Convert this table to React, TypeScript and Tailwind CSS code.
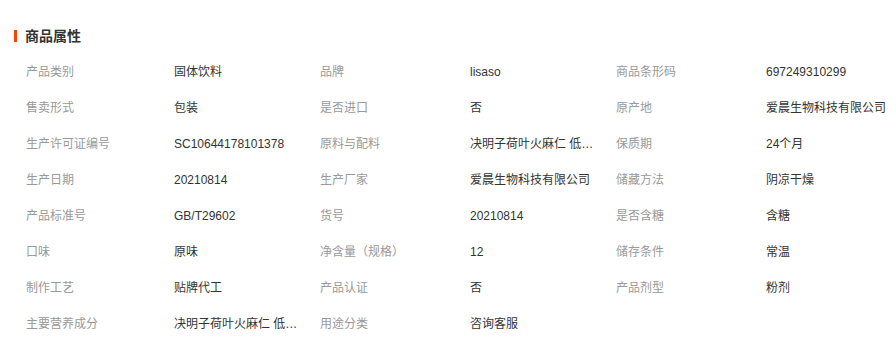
const attrs: [string, string][] = [
  ["产品类别", "固体饮料"],
  ["品牌", "lisaso"],
  ["商品条形码", "697249310299"],
  ["售卖形式", "包装"],
  ["是否进口", "否"],
  ["原产地", "爱晨生物科技有限公司"],
  ["生产许可证编号", "SC10644178101378"],
  ["原料与配料", "决明子荷叶火麻仁 低聚果糖 菊粉"],
  ["保质期", "24个月"],
  ["生产日期", "20210814"],
  ["生产厂家", "爱晨生物科技有限公司"],
  ["储藏方法", "阴凉干燥"],
  ["产品标准号", "GB/T29602"],
  ["货号", "20210814"],
  ["是否含糖", "含糖"],
  ["口味", "原味"],
  ["净含量（规格）", "12"],
  ["储存条件", "常温"],
  ["制作工艺", "贴牌代工"],
  ["产品认证", "否"],
  ["产品剂型", "粉剂"],
  ["主要营养成分", "决明子荷叶火麻仁 低聚果糖 菊粉"],
  ["用途分类", "咨询客服"],
];

export default function App() {
  return (
    <div
      className="w-[896px] h-[355px] overflow-hidden bg-white"
      style={{ fontFamily: '"Liberation Sans", "Noto Sans CJK SC", sans-serif' }}
    >
      <div className="flex items-center pt-[26px] pl-[14px]">
        <span className="w-[3px] h-[12px] bg-[#ff4400]" />
        <h2 className="ml-[8px] text-[14px] leading-[20px] font-bold text-[#333]">商品属性</h2>
      </div>

      <ul className="mt-[8px] pl-[26px] grid grid-cols-[294px_296px_296px] w-[912px]">
        {attrs.map(([label, value], i) => (
          <li key={label} className="flex h-[36px] items-center text-[12px] leading-[16px]">
            <span className={i % 3 === 0 ? "w-[148px] shrink-0 text-[#999]" : "w-[150px] shrink-0 text-[#999]"}>
              {label}
            </span>
            <span className="w-[124px] text-[#333] truncate">{value}</span>
          </li>
        ))}
      </ul>
    </div>
  );
}
